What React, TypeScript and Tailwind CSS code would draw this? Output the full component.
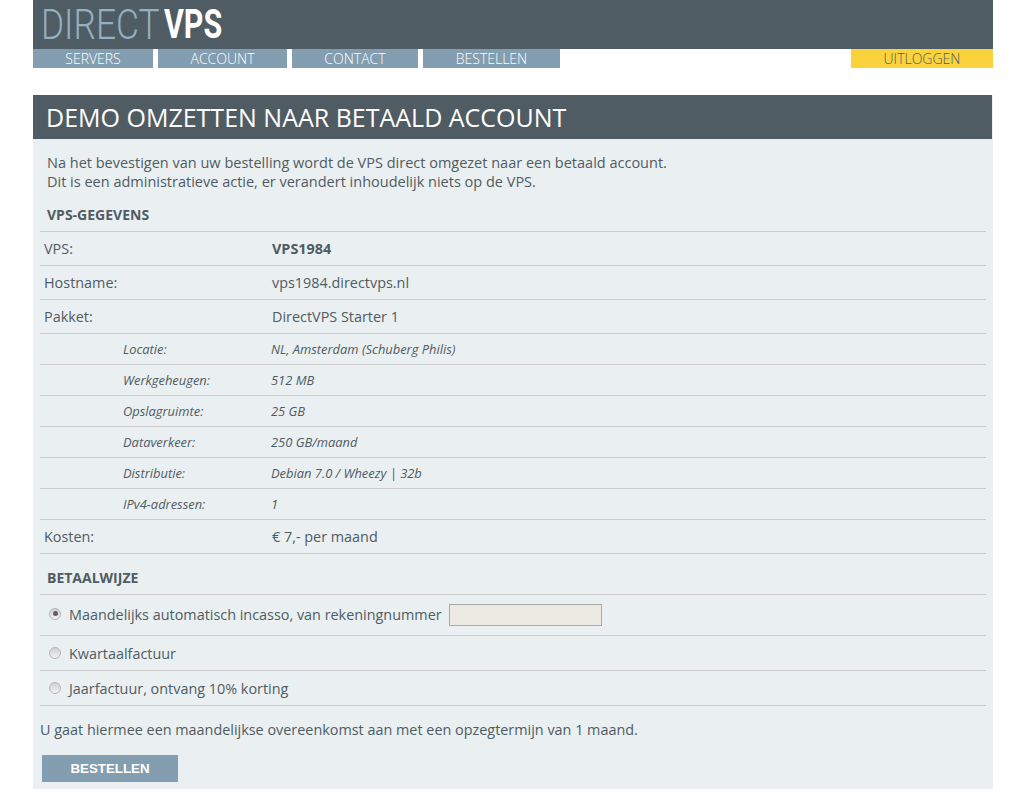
const openSans = { fontFamily: '"Open Sans", sans-serif' };

const navItems = [
  { label: "SERVERS", width: "w-[120px]" },
  { label: "ACCOUNT", width: "w-[129px]" },
  { label: "CONTACT", width: "w-[126px]" },
  { label: "BESTELLEN", width: "w-[137px]" },
];

const subRows = [
  ["Locatie:", "NL, Amsterdam (Schuberg Philis)"],
  ["Werkgeheugen:", "512 MB"],
  ["Opslagruimte:", "25 GB"],
  ["Dataverkeer:", "250 GB/maand"],
  ["Distributie:", "Debian 7.0 / Wheezy | 32b"],
  ["IPv4-adressen:", "1"],
];

function Row({ label, children }: { label: string; children: React.ReactNode }) {
  return (
    <div className="grid h-[34px] grid-cols-[228px_1fr] items-center border-b border-[#cccccc] pl-1 text-[14.4px]">
      <span>{label}</span>
      <span>{children}</span>
    </div>
  );
}

function SubRow({ label, value }: { label: string; value: string }) {
  return (
    <div className="grid h-[31px] grid-cols-[148px_1fr] items-center border-b border-[#cccccc] pt-[2px] pl-[83px] text-[12.9px] italic">
      <span>{label}</span>
      <span>{value}</span>
    </div>
  );
}

function Radio({ checked }: { checked?: boolean }) {
  return (
    <span className="mb-[3px] flex h-[12px] w-[12px] shrink-0 items-center justify-center rounded-full border border-[#b5b5b5] bg-gradient-to-b from-[#d0d0d0] to-[#f2f2f2]">
      {checked && <span className="h-[5px] w-[5px] rounded-full bg-[#5f5f5f]" />}
    </span>
  );
}

function PayRow({ height, checked, children }: { height: string; checked?: boolean; children: React.ReactNode }) {
  return (
    <div className={`flex items-center gap-[8px] border-b border-[#cccccc] pl-[9px] text-[14.4px] ${height}`}>
      <Radio checked={checked} />
      {children}
    </div>
  );
}

export default function App() {
  return (
    <div className="min-h-[799px] bg-white pl-[33px] text-[#505c63]" style={openSans}>
      <div className="w-[960px]">
        {/* Logo bar */}
        <div className="h-[49px] overflow-hidden bg-[#505c63] pl-2" style={{ fontFamily: "Roboto, sans-serif" }}>
          <div className="flex h-[49px] items-center">
            <span className="w-[123px] origin-left scale-x-[0.84] text-[42px] leading-none font-light whitespace-nowrap text-[#94afc1]">
              DIRECT
            </span>
            <span className="origin-left scale-x-[0.76] text-[40px] leading-none font-bold whitespace-nowrap text-white">
              VPS
            </span>
          </div>
        </div>

        {/* Navigation */}
        <div className="flex h-[19px] text-sm font-light">
          <div className="flex gap-[5px]">
            {navItems.map((item) => (
              <a key={item.label} className={`flex items-center justify-center bg-[#839eb0] text-white ${item.width}`}>
                {item.label}
              </a>
            ))}
          </div>
          <a className="ml-auto flex w-[142px] items-center justify-center bg-[#fad23c]">UITLOGGEN</a>
        </div>

        {/* Panel */}
        <div className="mt-[27px] h-[694px] bg-[#eaeff1]">
          <h1 className="mr-px flex h-11 items-center bg-[#505c63] pt-[2px] pl-[13px] text-[25px] text-white">
            DEMO OMZETTEN NAAR BETAALD ACCOUNT
          </h1>

          <div className="px-[7px]">
            <p className="pt-[14px] pl-[7px] text-[14.5px] leading-[19px]">
              Na het bevestigen van uw bestelling wordt de VPS direct omgezet naar een betaald account.
              <br />
              Dit is een administratieve actie, er verandert inhoudelijk niets op de VPS.
            </p>

            <h2 className="mt-[14px] h-[27px] border-b border-[#cccccc] pl-[7px] text-[14px] leading-[20px] font-bold">
              VPS-GEGEVENS
            </h2>

            <Row label="VPS:">
              <b className="font-bold">VPS1984</b>
            </Row>
            <Row label="Hostname:">vps1984.directvps.nl</Row>
            <Row label="Pakket:">DirectVPS Starter 1</Row>
            {subRows.map(([label, value]) => (
              <SubRow key={label} label={label} value={value} />
            ))}
            <Row label="Kosten:">€ 7,- per maand</Row>

            <h2 className="flex h-[41px] items-center border-b border-[#cccccc] pt-[6px] pl-[7px] text-[14px] font-bold">
              BETAALWIJZE
            </h2>

            <PayRow height="h-[41px]" checked>
              <span>Maandelijks automatisch incasso, van rekeningnummer</span>
              <input
                disabled
                className="-ml-px h-[22px] w-[153px] border border-[#a9a9a9] bg-[#ebebe4]"
              />
            </PayRow>
            <PayRow height="h-[35px] pt-[2px]">Kwartaalfactuur</PayRow>
            <PayRow height="h-[35px] pt-[2px]">Jaarfactuur, ontvang 10% korting</PayRow>

            <p className="mt-[14px] text-[14.4px] leading-[19px]">
              U gaat hiermee een maandelijkse overeenkomst aan met een opzegtermijn van 1 maand.
            </p>

            <button
              className="mt-[16px] ml-[2px] h-[27px] w-[136px] bg-[#839eb0] text-[13.3px] font-bold text-white"
              style={{ fontFamily: '"Liberation Sans", Arial, sans-serif' }}
            >
              BESTELLEN
            </button>
          </div>
        </div>
      </div>
    </div>
  );
}
